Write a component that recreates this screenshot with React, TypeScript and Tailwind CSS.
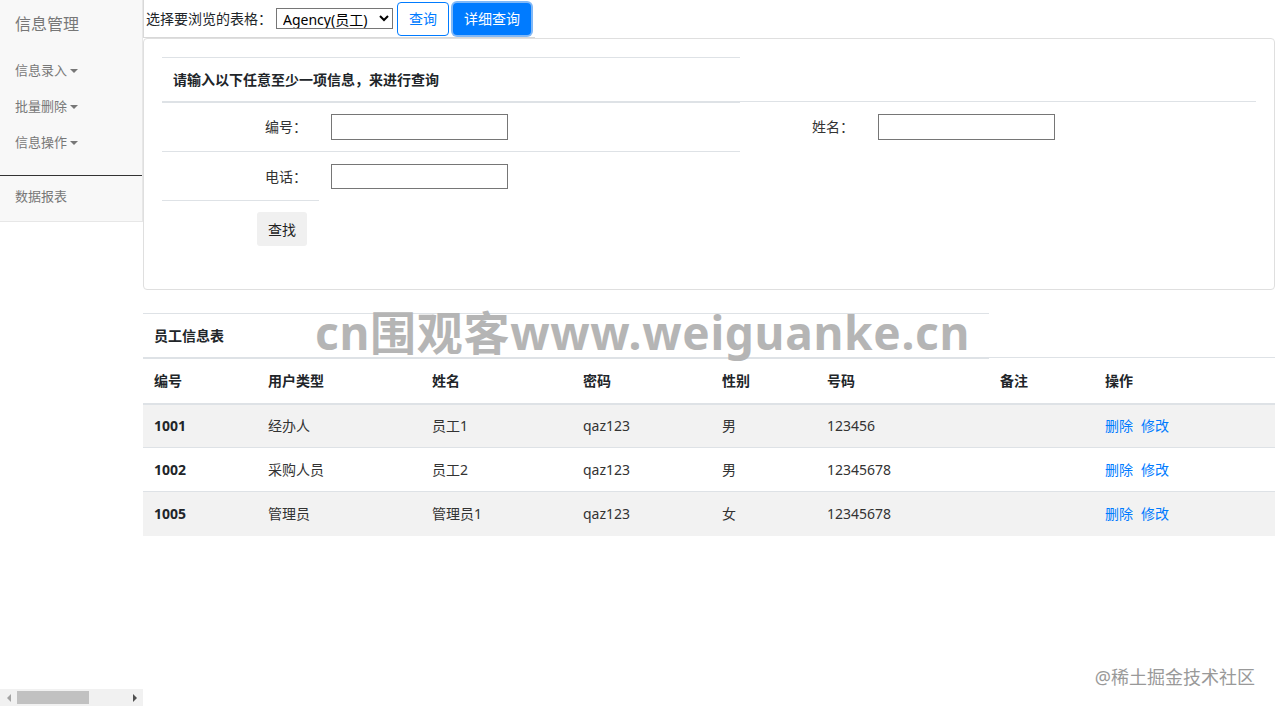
import React from 'react';

const menu = ['信息录入', '批量删除', '信息操作'];

const columns = [
  { title: '编号', width: 'w-[114px]' },
  { title: '用户类型', width: 'w-[164px]' },
  { title: '姓名', width: 'w-[151px]' },
  { title: '密码', width: 'w-[139px]' },
  { title: '性别', width: 'w-[105px]' },
  { title: '号码', width: 'w-[173px]' },
  { title: '备注', width: 'w-[105px]' },
  { title: '操作', width: 'w-[181px]' },
];

const employees = [
  { id: '1001', type: '经办人', name: '员工1', password: 'qaz123', gender: '男', phone: '123456', note: '' },
  { id: '1002', type: '采购人员', name: '员工2', password: 'qaz123', gender: '男', phone: '12345678', note: '' },
  { id: '1005', type: '管理员', name: '管理员1', password: 'qaz123', gender: '女', phone: '12345678', note: '' },
];

function Caret() {
  return (
    <span className="ml-[3px] inline-block h-0 w-0 border-x-[4px] border-t-[4px] border-x-transparent border-t-[#777]" />
  );
}

function Scrollbar() {
  return (
    <div className="flex h-[17px] items-center bg-[#f1f1f1]">
      <div className="flex w-[17px] justify-center">
        <span className="h-0 w-0 border-y-[4px] border-r-[4px] border-y-transparent border-r-[#a3a3a3]" />
      </div>
      <div className="h-full flex-1 py-[2px]">
        <div className="h-full w-[72px] bg-[#c1c1c1]" />
      </div>
      <div className="flex w-[17px] justify-center">
        <span className="h-0 w-0 border-y-[4px] border-l-[4px] border-y-transparent border-l-[#505050]" />
      </div>
    </div>
  );
}

function Sidebar() {
  return (
    <aside className="flex h-full w-[143px] shrink-0 flex-col">
      <div className="border-r border-b border-[#e7e7e7] bg-[#f8f8f8] text-[#777]">
        <div className="flex h-[48px] items-center pl-[15px] text-[16px]">信息管理</div>
        <ul className="pt-[5px] text-[13px]">
          {menu.map((item) => (
            <li key={item} className="flex h-[36px] items-center pl-[15px]">
              {item}
              <Caret />
            </li>
          ))}
        </ul>
        <div className="mt-[14px] h-px bg-[#333]" />
        <div className="flex h-[45px] items-center pb-[4px] pl-[15px] text-[13px]">数据报表</div>
      </div>
      <div className="flex-1" />
      <Scrollbar />
    </aside>
  );
}

function SearchCard() {
  const cell = 'border-t border-[#dee2e6] px-3';
  return (
    <div className="rounded-[4px] border border-[#dfdfdf] px-[18px] pt-[18px] pb-[32px]">
      <table className="w-[1094px] table-fixed border-collapse text-[14px] text-[#212529]">
        <colgroup>
          <col className="w-[157px]" />
          <col className="w-[421px]" />
          <col className="w-[126px]" />
          <col />
        </colgroup>
        <thead>
          <tr>
            <th colSpan={2} className="h-[44px] border-t border-b-2 border-[#dee2e6] px-[11px] text-left font-bold">
              请输入以下任意至少一项信息，来进行查询
            </th>
          </tr>
        </thead>
        <tbody className="text-[#333]">
          <tr className="h-[50px]">
            <td className={`${cell} text-right`}>编号：</td>
            <td className={cell}>
              <input className="block h-[26px] w-[177px] border border-[#767676] px-1" />
            </td>
            <td className={`${cell} text-right`}>姓名：</td>
            <td className={cell}>
              <input className="block h-[26px] w-[177px] border border-[#767676] px-1" />
            </td>
          </tr>
          <tr className="h-[49px]">
            <td className={`${cell} text-right`}>电话：</td>
            <td className={cell}>
              <input className="block h-[25px] w-[177px] border border-[#767676] px-1" />
            </td>
          </tr>
          <tr>
            <td className={`${cell} py-[11px] text-right`}>
              <button type="button" className="h-[34px] rounded-[3px] bg-[#f0f0f0] px-[11px] text-[14px] text-[#222]">
                查找
              </button>
            </td>
          </tr>
        </tbody>
      </table>
    </div>
  );
}

function EmployeeTable() {
  const border = 'border-[#dee2e6]';
  return (
    <table className="mt-[23px] w-full table-fixed border-collapse text-[14px]">
      <colgroup>
        {columns.map((c) => (
          <col key={c.title} className={c.width} />
        ))}
      </colgroup>
      <thead className="text-[#212529]">
        <tr>
          <th colSpan={6} className={`h-[44px] border-t border-b-2 ${border} px-[11px] text-left font-bold`}>
            员工信息表
          </th>
        </tr>
        <tr>
          {columns.map((c) => (
            <th key={c.title} className={`h-[46px] border-t border-b-2 ${border} px-[11px] text-left font-bold`}>
              {c.title}
            </th>
          ))}
        </tr>
      </thead>
      <tbody className="text-[#333]">
        {employees.map((e) => (
          <tr key={e.id} className="h-[44px] odd:bg-[#f2f2f2]">
            <td className={`border-t ${border} px-[11px] font-bold text-[#212529]`}>{e.id}</td>
            <td className={`border-t ${border} px-[11px]`}>{e.type}</td>
            <td className={`border-t ${border} px-[11px]`}>{e.name}</td>
            <td className={`border-t ${border} px-[11px]`}>{e.password}</td>
            <td className={`border-t ${border} px-[11px]`}>{e.gender}</td>
            <td className={`border-t ${border} px-[11px]`}>{e.phone}</td>
            <td className={`border-t ${border} px-[11px]`}>{e.note}</td>
            <td className={`border-t ${border} px-[11px]`}>
              <a href="#" className="mr-2 text-[#007bff]">删除</a>
              <a href="#" className="text-[#007bff]">修改</a>
            </td>
          </tr>
        ))}
      </tbody>
    </table>
  );
}

export default function App() {
  return (
    <div className="relative flex h-[706px] w-[1275px] overflow-hidden bg-white font-['Noto_Sans','Noto_Sans_CJK_SC',sans-serif] text-[#212529]">
      <Sidebar />
      <main className="relative flex-1">
        <div className="inline-flex h-[38px] items-center border-l border-b border-[#d8d8d8] pl-[2px] text-[14px]">
          <span>选择要浏览的表格：</span>
          <select className="ml-[4px] h-[21px] w-[117px] border border-[#767676] bg-white py-0 pl-[2px] text-[14px] leading-[19px] text-black">
            <option>Agency(员工)</option>
            <option>Manager(管理员)</option>
          </select>
          <button
            type="button"
            className="ml-[4px] h-[34px] rounded-[4px] border border-[#007bff] bg-white px-[11px] text-[14px] text-[#007bff]"
          >
            查询
          </button>
          <button
            type="button"
            className="mx-[4px] h-[32px] rounded-[4px] bg-[#007bff] px-[11px] text-[14px] text-white ring-2 ring-[#80b8f7]"
          >
            详细查询
          </button>
        </div>
        <SearchCard />
        <EmployeeTable />
        <div className="pointer-events-none absolute left-[172px] top-[309px] whitespace-nowrap text-[46px] font-bold leading-none tracking-[0.7px] text-[#b5b5b5]">
          cn围观客www.weiguanke.cn
        </div>
      </main>
      <div className="pointer-events-none absolute right-[20px] bottom-[20px] text-[18px] leading-none text-[#999]">
        @稀土掘金技术社区
      </div>
    </div>
  );
}
